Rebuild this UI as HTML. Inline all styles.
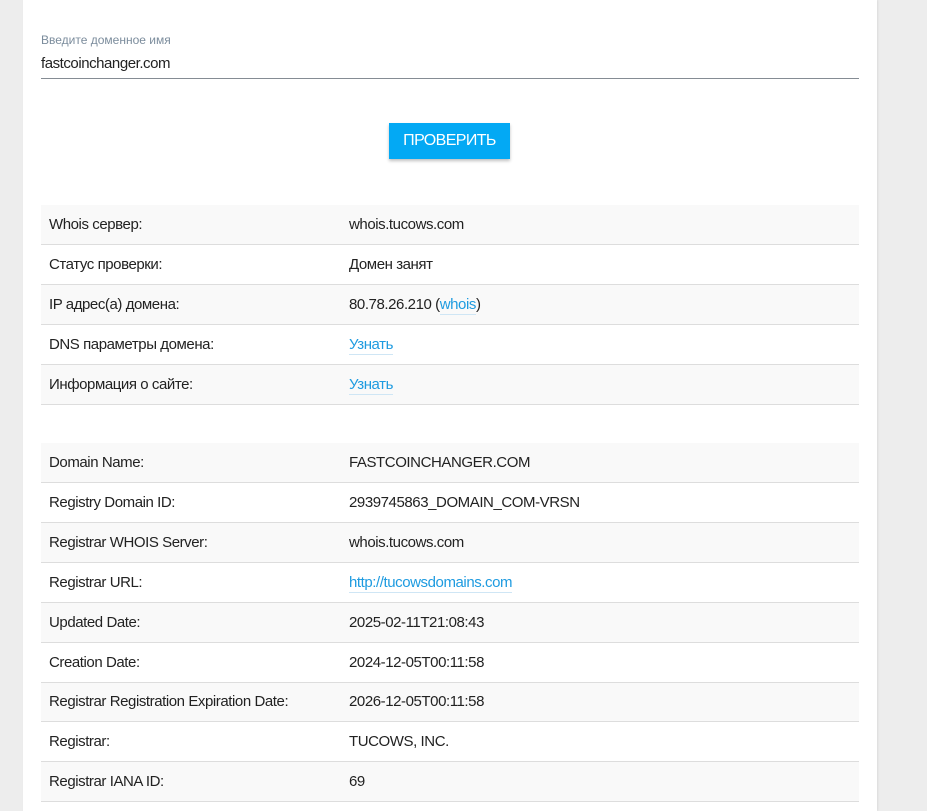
<!DOCTYPE html>
<html><head><meta charset="utf-8"><style>
body{margin:0;background:#ededed;font-family:"Liberation Sans",sans-serif;width:927px;height:811px;overflow:hidden}
.card{position:absolute;left:23px;top:0;width:854px;height:811px;background:#fff;box-shadow:1px 0 2px rgba(0,0,0,.08)}
.lbl{position:absolute;left:18px;top:33px;font-size:12px;color:#7b8c9c}
.val{position:absolute;left:18px;top:55px;font-size:15px;color:#222;letter-spacing:-.45px}
.line{position:absolute;left:18px;top:78px;width:818px;height:1px;background:#858c94}
.btn{position:absolute;left:366px;top:123px;width:121px;height:36px;background:#03a9f4;color:#fff;font-size:16px;line-height:36px;text-align:center;box-shadow:0 2px 3px rgba(0,0,0,.25);letter-spacing:-.6px}
table{position:absolute;left:18px;width:818px;border-collapse:collapse;font-size:15px;color:#222;letter-spacing:-.43px}
td{height:39px;border-bottom:1px solid #ddd;padding:0 0 0 8px;vertical-align:middle;line-height:18px}
td:first-child{width:292px}
tr:nth-child(odd) td{background:#f9f9f9}
a{color:#1e9be0;text-decoration:none;border-bottom:1px solid #cfe6f5;padding-bottom:1px}
</style></head><body>
<div class="card">
<div class="lbl">Введите доменное имя</div>
<div class="val">fastcoinchanger.com</div>
<div class="line"></div>
<div class="btn">ПРОВЕРИТЬ</div>
<table style="top:205px">
<tr><td>Whois сервер:</td><td>whois.tucows.com</td></tr>
<tr><td>Статус проверки:</td><td>Домен занят</td></tr>
<tr><td>IP адрес(а) домена:</td><td>80.78.26.210 (<a>whois</a>)</td></tr>
<tr><td>DNS параметры домена:</td><td><a>Узнать</a></td></tr>
<tr><td>Информация о сайте:</td><td><a>Узнать</a></td></tr>
</table>
<table style="top:443px">
<tr><td>Domain Name:</td><td>FASTCOINCHANGER.COM</td></tr>
<tr><td>Registry Domain ID:</td><td>2939745863_DOMAIN_COM-VRSN</td></tr>
<tr><td>Registrar WHOIS Server:</td><td>whois.tucows.com</td></tr>
<tr><td>Registrar URL:</td><td><a>http://tucowsdomains.com</a></td></tr>
<tr><td>Updated Date:</td><td>2025-02-11T21:08:43</td></tr>
<tr><td>Creation Date:</td><td>2024-12-05T00:11:58</td></tr>
<tr><td style="height:38px">Registrar Registration Expiration Date:</td><td style="height:38px">2026-12-05T00:11:58</td></tr>
<tr><td>Registrar:</td><td>TUCOWS, INC.</td></tr>
<tr><td>Registrar IANA ID:</td><td>69</td></tr>
</table>
</div>
</body></html>
